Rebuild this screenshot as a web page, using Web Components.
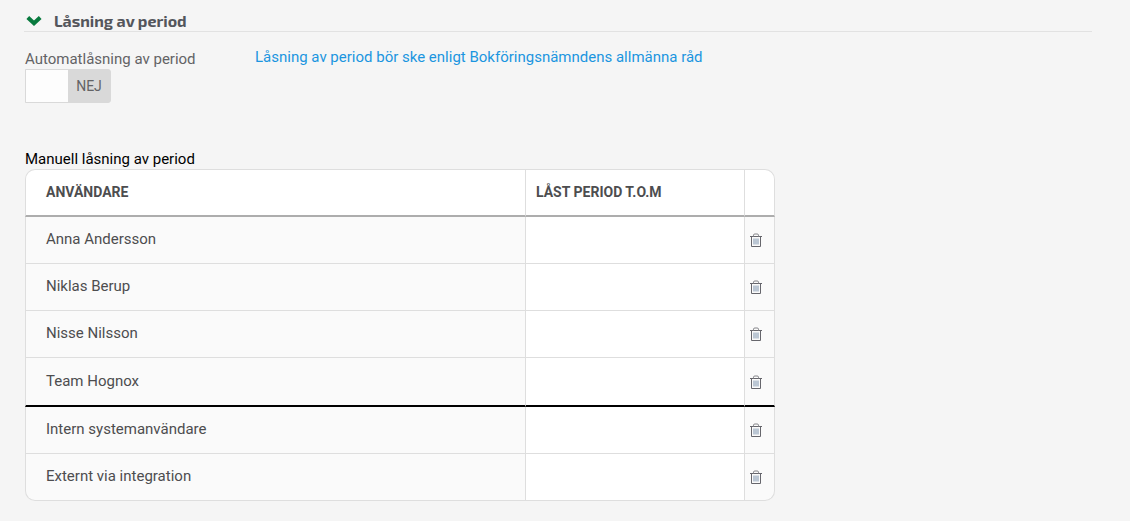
<!DOCTYPE html>
<html lang="sv">
<head>
<meta charset="utf-8">
<meta name="viewport" content="width=device-width, initial-scale=1">
<title>Låsning av period</title>
<style>
    body {
        margin: 0;
        background: #f5f5f5;
        color: #4d4d4f;
        font: 15px/20px Roboto, "Liberation Sans", sans-serif;
        --line: #dedede;
        --link: #1b95e0;
    }
</style>
</head>
<body>

<settings-section heading="Låsning av period">
    <period-switch slot="setting" label="Automatlåsning av period"></period-switch>
    <info-link slot="info" href="#bokforingsnamnden">Låsning av period bör ske enligt Bokföringsnämndens allmänna råd</info-link>
    <lock-table caption="Manuell låsning av period"></lock-table>
</settings-section>

<script>
    class SettingsSection extends HTMLElement {

        constructor() {
            super();
            this.shadow = this.attachShadow({mode: 'open'});
            this.render();
        }

        render() {
            this.shadow.innerHTML =
                `
            <style>
                :host {
                    display: block;
                    padding: 11px 38px 20px 24px;
                }
                h2 {
                    margin: 0;
                    border-bottom: 1px solid #e2e2e2;
                    line-height: 20px;
                }
                button {
                    display: flex;
                    align-items: center;
                    gap: 12px;
                    padding: 0 2px;
                    border: 0;
                    background: none;
                    color: #54565c;
                    font: 700 16px/20px "Exo 2", "Open Sans", sans-serif;
                    cursor: pointer;
                }
                svg {
                    width: 16px;
                    height: 12px;
                    color: #087a3e;
                }
                .content {
                    padding: 15px 0 0 1px;
                }
                .row {
                    display: grid;
                    grid-template-columns: 230px 1fr;
                    margin-bottom: 47px;
                }
            </style>
            <h2>
                <button type="button" aria-expanded="true">
                    <svg viewBox="0 0 16 12" aria-hidden="true">
                        <path fill="none" stroke="currentColor" stroke-width="4" d="M1.8 2.5L8 8.3L14.2 2.5" />
                    </svg>
                    <span></span>
                </button>
            </h2>
            <div class="content">
                <div class="row">
                    <slot name="setting"></slot>
                    <slot name="info"></slot>
                </div>
                <slot></slot>
            </div>
            `;
            this.shadow.querySelector("span").textContent = this.getAttribute("heading");

            let button = this.shadow.querySelector("button");
            let content = this.shadow.querySelector(".content");

            button.addEventListener("click", () => {
                content.hidden = !content.hidden;
                button.setAttribute("aria-expanded", String(!content.hidden));
            });
        }
    }

    customElements.define('settings-section', SettingsSection);


    class PeriodSwitch extends HTMLElement {

        constructor() {
            super();
            this.shadow = this.attachShadow({mode: 'open'});
            this.render();
        }

        render() {
            this.shadow.innerHTML =
                `
            <style>
                :host {
                    display: block;
                    color: #636365;
                }
                label {
                    display: block;
                    padding-top: 2px;
                }
                .switch {
                    display: grid;
                    grid-template-columns: 1fr 1fr;
                    box-sizing: border-box;
                    width: 86px;
                    height: 34px;
                    border: 1px solid #d9d9d9;
                    border-radius: 0 3px 3px 0;
                    background: #d9d9d9;
                    font-size: 14px;
                    line-height: 32px;
                    text-align: center;
                }
                .switch:has(:checked) {
                    background: #087a3e;
                }
                input {
                    appearance: none;
                    margin: 0;
                    background: #fdfdfd;
                    cursor: pointer;
                }
                input:checked {
                    order: 1;
                }
            </style>
            <label for="auto"></label>
            <div class="switch">
                <input type="checkbox" role="switch" id="auto">
                <span>NEJ</span>
            </div>
            `;
            this.shadow.querySelector("label").textContent = this.getAttribute("label");

            let input = this.shadow.querySelector("input");
            let state = this.shadow.querySelector("span");

            input.addEventListener("change", () => {
                state.textContent = input.checked ? "JA" : "NEJ";
            });
        }
    }

    customElements.define('period-switch', PeriodSwitch);


    class InfoLink extends HTMLElement {

        constructor() {
            super();
            this.shadow = this.attachShadow({mode: 'open'});
            this.render();
        }

        render() {
            this.shadow.innerHTML =
                `
            <style>
                :host {
                    display: block;
                }
                a {
                    color: var(--link);
                    text-decoration: none;
                }
                a:hover {
                    text-decoration: underline;
                }
            </style>
            <a><slot></slot></a>
            `;
            this.shadow.querySelector("a").href = this.getAttribute("href");
        }
    }

    customElements.define('info-link', InfoLink);


    class DeleteButton extends HTMLElement {

        constructor() {
            super();
            this.shadow = this.attachShadow({mode: 'open'});
            this.render();
        }

        render() {
            this.shadow.innerHTML =
                `
            <style>
                :host {
                    display: block;
                }
                button {
                    display: block;
                    padding: 0;
                    border: 0;
                    background: none;
                    color: #66666c;
                    cursor: pointer;
                }
                svg {
                    display: block;
                    width: 14px;
                    height: 14px;
                }
            </style>
            <button type="button" aria-label="Ta bort">
                <svg viewBox="0 0 14 14" fill="none" stroke="currentColor" aria-hidden="true">
                    <path d="M1 3.5H13M2.5 3.5V13.5H11.5V3.5" />
                    <path stroke="#85858a" d="M4.5 3.5V2.2L5.2 1H8.8L9.5 2.2V3.5" />
                    <path stroke="#7d93ad" d="M5 5.5V11.5M7 5.5V11.5M9 5.5V11.5" />
                </svg>
            </button>
            `;
        }
    }

    customElements.define('delete-button', DeleteButton);


    class LockTable extends HTMLElement {

        constructor() {
            super();
            this.shadow = this.attachShadow({mode: 'open'});
            this.users = [
                "Anna Andersson",
                "Niklas Berup",
                "Nisse Nilsson",
                "Team Hognox"
            ];
            this.systemUsers = [
                "Intern systemanvändare",
                "Externt via integration"
            ];
            this.render();
        }

        row(name) {
            return `
                <tr>
                    <td>${name}</td>
                    <td class="period"><input type="text" aria-label="Låst period t.o.m för ${name}"></td>
                    <td class="action"><delete-button></delete-button></td>
                </tr>`;
        }

        render() {
            this.shadow.innerHTML =
                `
            <style>
                :host {
                    display: block;
                    max-width: 750px;
                }
                table {
                    width: 100%;
                    table-layout: fixed;
                    border-collapse: separate;
                    border-spacing: 0;
                }
                caption {
                    color: #000;
                    text-align: left;
                    line-height: 19px;
                }
                .col-period {
                    width: 219px;
                }
                .col-action {
                    width: 30px;
                }
                th, td {
                    box-sizing: border-box;
                    height: 47px;
                    padding: 0 10px 2px;
                    border: 0 solid var(--line);
                    border-width: 0 1px 1px 0;
                    background: #fafafa;
                    text-align: left;
                }
                th {
                    height: 48px;
                    border-top-width: 1px;
                    border-bottom: 2px solid #adadad;
                    background: #fff;
                    font-size: 14px;
                    font-weight: 700;
                    text-transform: uppercase;
                }
                th:first-child, td:first-child {
                    padding-left: 20px;
                    border-left-width: 1px;
                }
                .users tr:last-child td {
                    height: 49px;
                    border-bottom: 2px solid #000;
                }
                .period {
                    padding: 0;
                    background: #fff;
                }
                .action {
                    padding: 0 0 0 4px;
                }
                input {
                    display: block;
                    box-sizing: border-box;
                    width: 100%;
                    height: 40px;
                    padding: 0 10px;
                    border: 0;
                    background: none;
                    color: inherit;
                    font: inherit;
                }
                th:first-child { border-top-left-radius: 10px; }
                th:last-child { border-top-right-radius: 10px; }
                .system tr:last-child td:first-child { border-bottom-left-radius: 10px; }
                .system tr:last-child td:last-child { border-bottom-right-radius: 10px; }
            </style>
            <table>
                <caption></caption>
                <colgroup>
                    <col>
                    <col class="col-period">
                    <col class="col-action">
                </colgroup>
                <thead>
                    <tr>
                        <th scope="col">Användare</th>
                        <th scope="col">Låst period t.o.m</th>
                        <th></th>
                    </tr>
                </thead>
                <tbody class="users">${this.users.map(name => this.row(name)).join("")}</tbody>
                <tbody class="system">${this.systemUsers.map(name => this.row(name)).join("")}</tbody>
            </table>
            `;
            this.shadow.querySelector("caption").textContent = this.getAttribute("caption");

            this.shadow.querySelectorAll("delete-button").forEach(button => {
                button.addEventListener("click", () => {
                    button.closest("tr").querySelector("input").value = "";
                });
            });
        }
    }

    customElements.define('lock-table', LockTable);
</script>
</body>
</html>
